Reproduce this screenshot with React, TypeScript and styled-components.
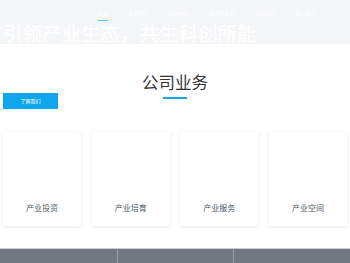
import styled, { createGlobalStyle } from 'styled-components';

const GlobalStyle = createGlobalStyle`
  html, body {
    margin: 0;
    padding: 0;
    background: #ffffff;
    font-family: 'Noto Sans CJK SC', 'Noto Sans', sans-serif;
  }
`;

const Page = styled.div`
  width: 350px;
  height: 263px;
  overflow: hidden;
  display: flex;
  flex-direction: column;
`;

const Banner = styled.header`
  height: 44px;
  background: #f5f6f8;
  overflow: hidden;
  display: flex;
  flex-direction: column;
`;

const Nav = styled.nav`
  display: flex;
  align-items: flex-start;
  gap: 20.5px;
  padding: 10px 0 0 98px;
  height: 12px;
`;

const NavItem = styled.a<{ $active?: boolean }>`
  color: #ffffff;
  font-size: 5px;
  line-height: 6px;
  text-decoration: none;
  white-space: nowrap;
  padding-bottom: 4px;
  border-bottom: 1.5px solid ${(p) => (p.$active ? '#5cc4f2' : 'transparent')};
`;

const Slogan = styled.h1`
  margin: 0;
  padding: 1px 0 0 3px;
  font-size: 19.5px;
  line-height: 20px;
  font-weight: 400;
  color: #ffffff;
  white-space: nowrap;
`;

const Business = styled.section`
  display: grid;
  grid-template-columns: 1fr auto 1fr;
  align-items: start;
  padding: 30px 3px 0;
`;

const AboutButton = styled.button`
  justify-self: start;
  margin-top: 19px;
  width: 55px;
  height: 16px;
  border: none;
  padding: 0;
  background: #0ea7ee;
  color: #ffffff;
  font-family: inherit;
  font-size: 5px;
  line-height: 16px;
  cursor: pointer;
`;

const TitleBlock = styled.div`
  display: flex;
  flex-direction: column;
  align-items: center;
`;

const Title = styled.h2`
  margin: 0;
  font-size: 16.5px;
  line-height: 17px;
  font-weight: 400;
  color: #333333;
`;

const TitleBar = styled.span`
  display: block;
  margin-top: 6px;
  width: 24px;
  height: 2px;
  background: #1aa5ea;
`;

const Cards = styled.div`
  display: grid;
  grid-template-columns: repeat(4, 1fr);
  gap: 10.67px;
  padding: 23px 3px 0;
`;

const Card = styled.div`
  height: 94px;
  background: #ffffff;
  box-shadow: 0 1px 4px rgba(0, 0, 0, 0.09);
  display: flex;
  flex-direction: column;
  justify-content: flex-end;
  align-items: center;
  padding-bottom: 14px;
  box-sizing: border-box;
`;

const CardLabel = styled.span`
  font-size: 8px;
  line-height: 8px;
  color: #505a66;
`;

const Footer = styled.footer`
  margin-top: auto;
  height: 14px;
  border-top: 1px solid #c9cbce;
  background: #73777e;
  display: grid;
  grid-template-columns: repeat(3, 1fr);
`;

const FooterCell = styled.div`
  & + & {
    border-left: 1px solid #9b9ea4;
  }
`;

const navItems = ['首页', '关于我们', '新闻中心', '投资者关系', '公司业务', '加入我们'];
const services = ['产业投资', '产业培育', '产业服务', '产业空间'];

export default function App() {
  return (
    <Page>
      <GlobalStyle />
      <Banner>
        <Nav>
          {navItems.map((item, i) => (
            <NavItem key={item} $active={i === 0}>
              {item}
            </NavItem>
          ))}
        </Nav>
        <Slogan>引领产业生态，共生科创所能</Slogan>
      </Banner>

      <Business>
        <AboutButton>了解我们</AboutButton>
        <TitleBlock>
          <Title>公司业务</Title>
          <TitleBar />
        </TitleBlock>
        <div />
      </Business>

      <Cards>
        {services.map((s) => (
          <Card key={s}>
            <CardLabel>{s}</CardLabel>
          </Card>
        ))}
      </Cards>

      <Footer>
        <FooterCell />
        <FooterCell />
        <FooterCell />
      </Footer>
    </Page>
  );
}
